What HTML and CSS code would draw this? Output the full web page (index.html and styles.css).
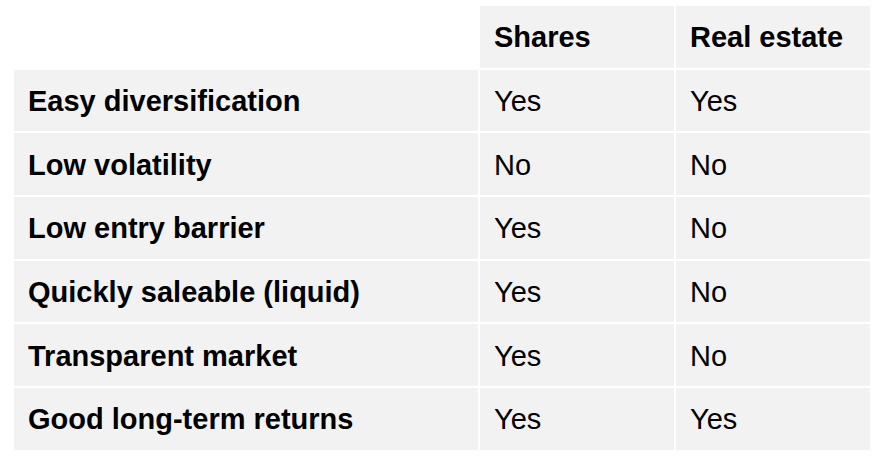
FILE: index.html
```html
<!DOCTYPE html>
<html lang="en">
<head>
<meta charset="utf-8">
<title>Shares vs Real estate</title>
<link rel="stylesheet" href="styles.css">
</head>
<body>
<table class="compare">
  <colgroup>
    <col class="col-label">
    <col class="col-val">
    <col class="col-val">
  </colgroup>
  <thead>
    <tr>
      <th class="blank"></th>
      <th>Shares</th>
      <th>Real estate</th>
    </tr>
  </thead>
  <tbody>
    <tr><th>Easy diversification</th><td>Yes</td><td>Yes</td></tr>
    <tr><th>Low volatility</th><td>No</td><td>No</td></tr>
    <tr><th>Low entry barrier</th><td>Yes</td><td>No</td></tr>
    <tr><th>Quickly saleable (liquid)</th><td>Yes</td><td>No</td></tr>
    <tr><th>Transparent market</th><td>Yes</td><td>No</td></tr>
    <tr><th>Good long-term returns</th><td>Yes</td><td>Yes</td></tr>
  </tbody>
</table>
</body>
</html>
```

FILE: styles.css
```css
html, body {
  margin: 0;
  padding: 0;
  background: #ffffff;
}

body {
  padding: 4px 0 0 12px;
  font-family: "Liberation Sans", Arial, Helvetica, sans-serif;
  color: #000000;
}

.compare {
  border-collapse: separate;
  border-spacing: 2px;
  table-layout: fixed;
  width: 860px;
  font-size: 29px;
}

.col-label { width: 464px; }
.col-val { width: 194px; }

.compare th,
.compare td {
  background: #f2f2f2;
  height: 61.7px;
  padding: 2px 14px 0 14px;
  box-sizing: border-box;
  text-align: left;
  vertical-align: middle;
  white-space: nowrap;
}

.compare th {
  font-weight: bold;
}

.compare td {
  font-weight: normal;
}

.compare th.blank {
  background: transparent;
}
```
